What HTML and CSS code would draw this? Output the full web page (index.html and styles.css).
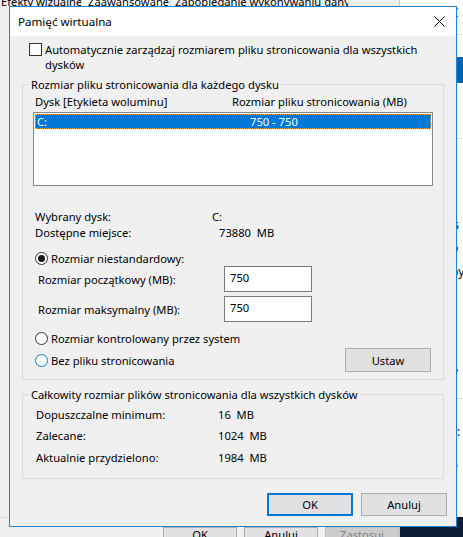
FILE: index.html
```html
<!DOCTYPE html>
<html lang="pl">
<head>
<meta charset="utf-8">
<title>Pamięć wirtualna</title>
<link rel="stylesheet" href="styles.css">
</head>
<body>
<div class="desk">
  <div class="perf">
    <div class="tabs">
      <span class="tab t1">Efekty wizualne</span>
      <span class="tab t2">Zaawansowane</span>
      <span class="tab t3">Zapobieganie wykonywaniu danych</span>
    </div>
    <div class="perf-body"></div>
    <div class="perf-btns">
      <span class="pbtn">OK</span>
      <span class="pbtn">Anuluj</span>
      <span class="pbtn dis">Zastosuj</span>
    </div>
  </div>
  <div class="sys">
    <div class="sys-main">
      <div class="frag f-c link">C</div>
      <div class="hline h1"></div>
      <div class="blueblock"></div>
      <div class="hline h2"></div>
      <div class="frag f-par">(</div>
      <div class="frag f-rs">'s</div>
      <div class="frag f-p">p</div>
      <div class="frag f-py">py</div>
      <div class="frag f-P">P</div>
      <div class="hline h3"></div>
      <div class="frag f-y">y:</div>
      <div class="frag f-6">6</div>
    </div>
    <div class="desktop"></div>
  </div>
</div>

<div class="dialog">
  <div class="titlebar">
    <span class="title">Pamięć wirtualna</span>
    <svg class="close" width="11" height="11" viewBox="0 0 11 11"><path d="M0.5 0.5 L10.5 10.5 M10.5 0.5 L0.5 10.5" stroke="#000" stroke-width="1" fill="none"/></svg>
  </div>
  <div class="dbody">
    <div class="auto-row">
      <span class="checkbox"></span>
      <span class="auto-text">Automatycznie zarządzaj rozmiarem pliku stronicowania dla wszystkich<br>dysków</span>
    </div>

    <fieldset class="group g1">
      <legend>Rozmiar pliku stronicowania dla każdego dysku</legend>
      <div class="cols">
        <span class="col1">Dysk [Etykieta woluminu]</span>
        <span>Rozmiar pliku stronicowania (MB)</span>
      </div>
      <div class="listbox">
        <div class="item sel"><span class="icol1">C:</span><span>750 - 750</span></div>
      </div>
      <div class="info r1"><span class="ilabel">Wybrany dysk:</span><span>C:</span></div>
      <div class="info r2"><span class="ilabel">Dostępne miejsce:</span><span class="v2">73880&nbsp; MB</span></div>

      <div class="radio-row rr1"><span class="radio checked"></span><span>Rozmiar niestandardowy:</span></div>
      <div class="field-row fr1"><span class="flabel">Rozmiar początkowy (MB):</span><span class="tbox">750</span></div>
      <div class="field-row fr2"><span class="flabel">Rozmiar maksymalny (MB):</span><span class="tbox">750</span></div>
      <div class="radio-row rr2"><span class="radio"></span><span>Rozmiar kontrolowany przez system</span></div>
      <div class="radio-row rr3"><span class="radio hover"></span><span>Bez pliku stronicowania</span><span class="btn ustaw">Ustaw</span></div>
    </fieldset>

    <fieldset class="group g2">
      <legend>Całkowity rozmiar plików stronicowania dla wszystkich dysków</legend>
      <div class="trow t-1"><span class="tlabel">Dopuszczalne minimum:</span><span>16&nbsp; MB</span></div>
      <div class="trow t-2"><span class="tlabel">Zalecane:</span><span>1024&nbsp; MB</span></div>
      <div class="trow t-3"><span class="tlabel">Aktualnie przydzielono:</span><span>1984&nbsp; MB</span></div>
    </fieldset>

    <div class="buttons">
      <span class="btn default">OK</span>
      <span class="btn">Anuluj</span>
    </div>
  </div>
</div>
</body>
</html>
```

FILE: styles.css
```css
* { box-sizing: border-box; }
html, body { margin: 0; padding: 0; }
body {
  width: 463px;
  height: 537px;
  overflow: hidden;
  position: relative;
  background: #f0f0f0;
  font-family: "Noto Sans", "Open Sans", sans-serif;
  font-size: 11.2px;
  color: #000;
}

/* ---------- background windows ---------- */
.desk { display: flex; height: 537px; }
.perf { width: 405px; display: flex; flex-direction: column; background: #f0f0f0; }
.tabs { display: flex; height: 20px; margin-top: -8px; line-height: 20px; white-space: nowrap; }
.tab { border-right: 1px solid #d9d9d9; overflow: hidden; }
.t1 { width: 82px; padding-left: 1px; }
.t2 { width: 89px; padding-left: 6px; background: #fff; }
.t3 { width: 178px; padding-left: 4px; }
.perf-body { flex: 1; border-bottom: 1px solid #dadada; }
.perf-btns { height: 19px; display: flex; gap: 7px; padding: 9px 0 0 163px; }
.pbtn {
  width: 74px; height: 23px; background: #e1e1e1; border: 1px solid #adadad;
  text-align: center; line-height: 14px;
}
.pbtn.dis { background: #cccccc; border-color: #bfbfbf; color: #838383; }

.sys { flex: 1; background: #fff; border-left: 1px solid #c8c8c8; display: flex; flex-direction: column; }
.sys-main { flex: 1; padding-left: 51px; overflow: hidden; }
.frag { height: 16px; line-height: 16px; white-space: nowrap; font-size: 12px; }
.link { color: #1a3d8f; }
.f-c { margin-top: 5px; }
.hline { height: 1px; background: #dadada; margin-left: -51px; }
.h1 { margin-top: 13px; }
.blueblock { margin-top: 22px; height: 26px; background: #0a64ad; margin-left: -51px; }
.h2 { margin-top: 55px; }
.f-par { margin-top: 18px; }
.f-rs { margin-top: 44px; }
.f-p { margin-top: 7px; }
.f-py { margin-top: 8px; }
.f-P { margin-top: 85px; }
.h3 { margin-top: 17px; }
.f-y { margin-top: 25px; }
.f-6 { margin-top: 17px; }
.desktop { height: 20px; background: #0b1d33; }

/* ---------- dialog ---------- */
.dialog {
  position: absolute;
  left: 9px; top: 6px;
  width: 448px; height: 521px;
  border: 1px solid #1883d7;
  background: #f0f0f0;
  display: flex; flex-direction: column;
}
.titlebar {
  height: 29px; flex: none; background: #fff;
  display: flex; align-items: center; justify-content: space-between;
  padding: 0 11px 0 8px;
}
.title { line-height: 16px; font-size: 11.6px; }
.close { display: block; }

.dbody { flex: 1; display: flex; flex-direction: column; }

.auto-row { display: flex; align-items: flex-start; margin-top: 6px; padding-left: 19px; line-height: 15px; }
.checkbox { width: 13px; height: 13px; border: 1px solid #333; background: #fff; margin-top: 1px; margin-right: 3px; flex: none; }

.group {
  margin: 4px 12px 0;
  padding: 0 10px 7px;
  border: 1px solid #dcdcdc;
  min-width: 0;
}
.group legend { padding: 0 2px; margin-left: -4px; line-height: 17px; }
.g2 { margin-top: 6px; padding-bottom: 12px; }

.cols { display: flex; margin-top: 1px; padding-left: 2px; line-height: 16px; }
.col1 { width: 197px; }

.listbox { margin-top: 2px; height: 74px; border: 1px solid #828790; background: #fff; padding: 1px; }
.item { height: 15px; line-height: 15px; display: flex; padding-left: 2px; }
.item.sel { background: #0078d7; color: #fff; outline: 1px dotted #f7a348; outline-offset: -1px; }
.icol1 { width: 213px; }

.info { display: flex; padding-left: 2px; line-height: 16px; }
.r1 { margin-top: 23px; }
.ilabel { width: 177px; }
.v2 { padding-left: 7px; }

.radio-row { display: flex; align-items: center; padding-left: 2px; }
.radio {
  width: 13px; height: 13px; border: 1px solid #333; border-radius: 50%;
  background: #fff; margin-right: 3px; flex: none;
  display: flex; align-items: center; justify-content: center;
}
.radio.checked::after { content: ""; width: 7px; height: 7px; border-radius: 50%; background: #1a1a1a; }
.radio.hover { border-color: #0078d7; }
.rr1 { margin-top: 10px; height: 15px; }
.rr2 { margin-top: 8px; height: 16px; }
.rr3 { margin-top: 2px; height: 24px; }

.field-row { display: flex; align-items: center; padding-left: 5px; height: 26px; }
.fr2 { margin-top: 4px; }
.flabel { width: 186px; }
.tbox {
  width: 88px; height: 26px; border: 1px solid #7a7a7a; background: #fff;
  padding: 0 0 2px 5px; line-height: 22px;
}

.btn {
  width: 86px; height: 23px; background: #e1e1e1; border: 1px solid #adadad;
  display: flex; align-items: center; justify-content: center;
}
.ustaw { margin-left: auto; margin-right: 2px; height: 24px; }

.trow { display: flex; padding-left: 3px; line-height: 16px; }
.t-1 { margin-top: 4px; }
.t-2 { margin-top: 5px; }
.t-3 { margin-top: 6px; }
.tlabel { width: 182px; }

.buttons { display: flex; justify-content: flex-end; gap: 8px; margin-top: 14px; padding-right: 9px; }
.btn.default { border: 2px solid #0078d7; }
```
